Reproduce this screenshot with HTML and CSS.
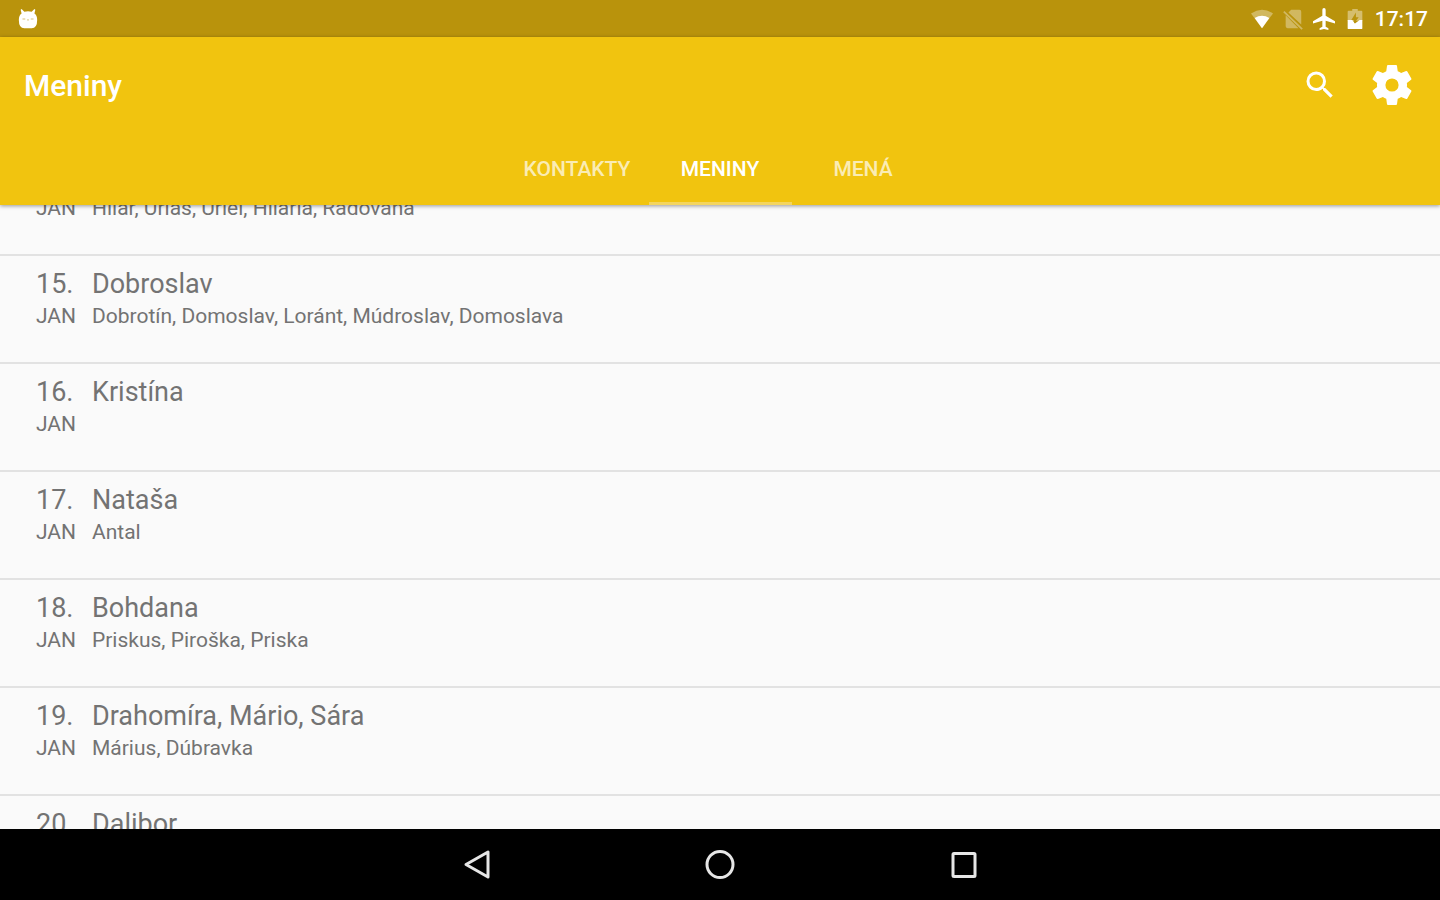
FILE: index.html
```html
<!DOCTYPE html>
<html lang="sk">
<head>
    <meta charset="UTF-8">
    <meta name="viewport" content="width=device-width, initial-scale=1.0">
    <title>Meniny</title>
    <link rel="stylesheet" href="styles.css">
</head>
<body>
    <!-- status bar -->
    <div class="status-bar">
        <svg class="status-icon" viewBox="0 0 24 24" aria-hidden="true">
            <path fill="#fff" d="M5 1l3 3q4-1 8 0l3-3 1 1-1 4q3 2 3 7 0 9-6 9H8q-6 0-6-9 0-5 3-7L4 2z"/>
            <path stroke="#b9930c" stroke-width="1" opacity=".6" d="M6 12h3M15 12h3M11 13h2"/>
        </svg>
        <div class="status-right">
            <svg class="status-icon" viewBox="0 0 24 24" aria-hidden="true">
                <path fill="#fff" opacity=".35" d="M12 22L0 6q12-8 24 0z"/>
                <path fill="#fff" d="M12 22L4 11q8-5 16 0z"/>
            </svg>
            <svg class="status-icon" viewBox="0 0 24 24" aria-hidden="true">
                <path fill="#fff" opacity=".35" d="M10 2h9q2 0 2 2v14L7 5zM4 8l14 14H6q-2 0-2-2z"/>
                <path stroke="#fff" stroke-width="2" opacity=".35" d="M2 4l20 19"/>
            </svg>
            <svg class="status-icon" viewBox="2 2 20 20" aria-hidden="true">
                <path fill="#fff" d="M22 16v-2l-8.500-5V3.500a1.500 1.500 0 0 0-3 0V9L2 14v2l8.500-2.500V19L8 20.500V22l4-1 4 1v-1.500L13.500 19v-5.500z"/>
            </svg>
            <svg class="status-icon" viewBox="0 0 24 24" aria-hidden="true">
                <path fill="#fff" opacity=".4" d="M9 1h6v2h4q1 0 1 1v10H4V4q0-1 1-1h4z"/>
                <path fill="#fff" d="M4 13h5l3 4 5-4h3v9q0 1-1 1H5q-1 0-1-1z"/>
                <path fill="#b9930c" d="M13 5l-5 8h3v4l5-7h-3z"/>
            </svg>
            <span class="clock">17:17</span>
        </div>
    </div>

    <!-- app bar -->
    <header class="app-bar">
        <div class="toolbar">
            <h1>Meniny</h1>
            <button type="button" class="icon-btn" aria-label="Hľadať">
                <svg width="36" height="36" viewBox="0 0 24 24">
                    <path fill="#fff" d="M15.500 14h-.790l-.280-.270A6.470 6.470 0 0 0 16 9.500 6.500 6.500 0 1 0 9.500 16c1.610 0 3.090-.590 4.230-1.570l.270.280v.790l5 4.990L20.490 19zm-6 0a4.500 4.500 0 1 1 0-9 4.500 4.500 0 0 1 0 9z"/>
                </svg>
            </button>
            <button type="button" class="icon-btn" aria-label="Nastavenia">
                <svg width="48" height="48" viewBox="0 0 24 24">
                    <path fill="#fff" d="M19.430 12.980c.040-.320.070-.640.070-.980s-.030-.660-.070-.980l2.110-1.650c.190-.150.240-.420.120-.640l-2-3.460c-.120-.220-.390-.300-.610-.220l-2.490 1c-.520-.400-1.080-.730-1.690-.980l-.380-2.650A.490.490 0 0 0 14 2h-4c-.250 0-.460.180-.490.420l-.380 2.650c-.610.250-1.170.590-1.690.980l-2.490-1c-.230-.090-.490 0-.610.220l-2 3.460c-.130.220-.070.490.120.640l2.110 1.650c-.040.320-.070.650-.070.980s.030.660.070.980l-2.110 1.650c-.190.150-.240.420-.120.640l2 3.460c.120.220.390.300.610.220l2.490-1c.520.400 1.080.730 1.690.980l.380 2.650c.030.240.240.420.490.420h4c.250 0 .460-.180.490-.420l.380-2.650c.610-.250 1.170-.590 1.690-.980l2.490 1c.230.090.490 0 .610-.220l2-3.460c.120-.220.070-.490-.120-.640zM12 15.300a3.300 3.300 0 1 1 0-6.600 3.300 3.300 0 0 1 0 6.600z"/>
                </svg>
            </button>
        </div>
        <nav class="tabs">
            <button type="button" class="tab">KONTAKTY</button>
            <button type="button" class="tab active">MENINY</button>
            <button type="button" class="tab">MENÁ</button>
        </nav>
    </header>

    <!-- name day list -->
    <main class="content">
        <ul class="days">
            <li class="day">
                <span class="num">14.</span><span class="name">Radovan</span>
                <span class="month">JAN</span><span class="others">Hilár, Uriáš, Uriel, Hilária, Radovana</span>
            </li>
            <li class="day">
                <span class="num">15.</span><span class="name">Dobroslav</span>
                <span class="month">JAN</span><span class="others">Dobrotín, Domoslav, Loránt, Múdroslav, Domoslava</span>
            </li>
            <li class="day">
                <span class="num">16.</span><span class="name">Kristína</span>
                <span class="month">JAN</span><span class="others"></span>
            </li>
            <li class="day">
                <span class="num">17.</span><span class="name">Nataša</span>
                <span class="month">JAN</span><span class="others">Antal</span>
            </li>
            <li class="day">
                <span class="num">18.</span><span class="name">Bohdana</span>
                <span class="month">JAN</span><span class="others">Priskus, Piroška, Priska</span>
            </li>
            <li class="day">
                <span class="num">19.</span><span class="name">Drahomíra, Mário, Sára</span>
                <span class="month">JAN</span><span class="others">Márius, Dúbravka</span>
            </li>
            <li class="day">
                <span class="num">20.</span><span class="name">Dalibor</span>
                <span class="month">JAN</span><span class="others"></span>
            </li>
        </ul>
    </main>

    <!-- system navigation -->
    <footer class="nav-bar">
        <button type="button" class="nav-btn" aria-label="Späť">
            <svg width="32" height="32" viewBox="0 0 32 32"><path d="M27 3v25L5 15.500z"/></svg>
        </button>
        <button type="button" class="nav-btn" aria-label="Domov">
            <svg width="32" height="32" viewBox="0 0 32 32"><circle cx="16" cy="15.500" r="13"/></svg>
        </button>
        <button type="button" class="nav-btn" aria-label="Prehľad">
            <svg width="32" height="32" viewBox="0 0 32 32"><rect x="6" y="4.500" width="22" height="23" rx="1"/></svg>
        </button>
    </footer>
</body>
</html>
```
FILE: styles.css
```css
* {
    box-sizing: border-box;
}
body {
    margin: 0;
    height: 100vh;
    display: flex;
    flex-direction: column;
    overflow: hidden;
    font-family: Roboto, "Noto Sans", sans-serif;
    background-color: #fafafa;
    color: #737373;
}
button {
    padding: 0;
    border: 0;
    background: none;
    font-family: inherit;
    cursor: pointer;
}
svg {
    display: block;
}

/* status bar */
.status-bar {
    flex: none;
    height: 37px;
    padding: 0 12px 0 17px;
    display: flex;
    align-items: center;
    justify-content: space-between;
    background-color: #b9930c;
    color: #fff;
}
.status-right {
    display: flex;
    align-items: center;
    gap: 9px;
}
.status-icon {
    width: 22px;
    height: 22px;
}
.clock {
    font-size: 21px;
    font-weight: 500;
    line-height: 24px;
}

/* app bar */
.app-bar {
    flex: none;
    position: relative;
    background-color: #f1c40f;
    box-shadow: 0 1px 4px rgba(0, 0, 0, 0.4);
}
.toolbar {
    height: 96px;
    padding: 0 24px;
    display: flex;
    align-items: center;
}
.toolbar h1 {
    flex: 1;
    margin: 0;
    padding-top: 2px;
    font-size: 30px;
    font-weight: 500;
    line-height: 40px;
    color: #fff;
}
.icon-btn {
    width: 48px;
    height: 48px;
    display: flex;
    align-items: center;
    justify-content: center;
}
.icon-btn + .icon-btn {
    margin-left: 24px;
}
.tabs {
    display: flex;
    justify-content: center;
}
.tab {
    width: 143px;
    height: 72px;
    border-top: 3px solid transparent;
    border-bottom: 3px solid transparent;
    font-size: 21px;
    font-weight: 500;
    color: rgba(255, 255, 255, 0.7);
}
.tab.active {
    color: #fff;
    border-bottom-color: #f3d560;
}

/* list, scrolled part way into the first row */
.content {
    flex: 1;
    min-height: 0;
    overflow: hidden;
}
.days {
    margin: -57px 0 0;
    padding: 0;
    list-style: none;
}
.day {
    height: 108px;
    padding: 12px 36px 0;
    display: grid;
    grid-template-columns: 56px 1fr;
    grid-auto-rows: 32px;
    border-bottom: 2px solid #e2e2e2;
    line-height: 32px;
    font-size: 21px;
}
.num, .name {
    font-size: 27px;
}

/* system navigation */
.nav-bar {
    flex: none;
    height: 71px;
    display: flex;
    align-items: center;
    justify-content: center;
    gap: 195px;
    background-color: #000;
}
.nav-btn {
    width: 48px;
    height: 48px;
    display: flex;
    align-items: center;
    justify-content: center;
}
.nav-btn svg {
    fill: none;
    stroke: #e6e6e6;
    stroke-width: 3;
    stroke-linejoin: round;
}
```
